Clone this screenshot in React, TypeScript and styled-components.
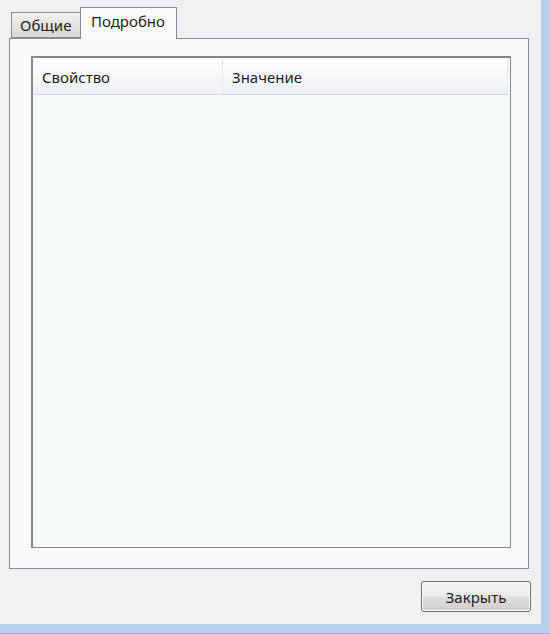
import styled, { createGlobalStyle } from "styled-components";

const GlobalStyle = createGlobalStyle`
  html, body {
    margin: 0;
    padding: 0;
    background: #f0f0f0;
  }
  body {
    font-family: "Noto Sans", "DejaVu Sans", sans-serif;
    font-size: 15px;
    color: #1e1e1e;
  }
`;

function App() {
  return (
    <>
      <GlobalStyle />
      <Window>
        <Body>
          <TabRow>
            <Tab>Общие</Tab>
            <Tab active>Подробно</Tab>
          </TabRow>
          <Panel>
            <ListBox>
              <Header>
                <HeaderCell width={190}>Свойство</HeaderCell>
                <HeaderCell>Значение</HeaderCell>
              </Header>
            </ListBox>
          </Panel>
          <Footer>
            <Button>Закрыть</Button>
          </Footer>
        </Body>
        <SideFrame />
        <BottomFrame />
      </Window>
    </>
  );
}

export default App;

const Window = styled.div`
  width: 550px;
  height: 634px;
  display: grid;
  grid-template-columns: 541px 9px;
  grid-template-rows: 624px 10px;
  overflow: hidden;
`;

const Body = styled.div`
  padding: 7px 0 0 9px;
  display: flex;
  flex-direction: column;
`;

const SideFrame = styled.div`
  background: linear-gradient(to right, #b4cde8, #bcd4ec);
`;

const BottomFrame = styled.div`
  grid-column: 1 / 3;
  background: #b9d1ea;
  border-bottom: 1px solid #48cdec;
`;

const TabRow = styled.div`
  height: 31px;
  display: flex;
  align-items: flex-end;
  padding-left: 2px;
  position: relative;
  z-index: 1;
`;

const Tab = styled.div<{ active?: boolean }>`
  box-sizing: border-box;
  height: ${({ active }) => (active ? "32px" : "26px")};
  margin-bottom: ${({ active }) => (active ? "-1px" : "0")};
  padding: ${({ active }) => (active ? "3px 10px 0 10px" : "2px 4px 0 8px")};
  border: 1px solid #898c95;
  border-bottom: ${({ active }) => (active ? "none" : "1px solid #898c95")};
  border-right: ${({ active }) => (active ? "1px solid #898c95" : "none")};
  background: ${({ active }) =>
    active ? "#fbfcfa" : "linear-gradient(#f2f2f2, #e3e3e3 50%, #d9d9d9)"};
  width: ${({ active }) => (active ? "97px" : "69px")};
  line-height: 20px;
  white-space: nowrap;
`;

const Panel = styled.div`
  box-sizing: border-box;
  width: 520px;
  height: 531px;
  border: 1px solid #898c95;
  background: #f9fbf8;
  padding: 17px 0 0 21px;
`;

const ListBox = styled.div`
  box-sizing: border-box;
  width: 480px;
  height: 492px;
  border: 1px solid #828790;
  border-left-width: 2px;
  border-top-width: 2px;
  background: #f7fbf7;
  padding-right: 2px;
`;

const Header = styled.div`
  height: 36px;
  display: flex;
  border-bottom: 1px solid #d5d5d5;
  background: linear-gradient(#ffffff, #f7f8fa 50%, #eef1f5);
`;

const HeaderCell = styled.div<{ width?: number }>`
  box-sizing: border-box;
  width: ${({ width }) => (width ? `${width}px` : "auto")};
  flex: ${({ width }) => (width ? "none" : "1")};
  padding: 9px 0 0 9px;
  border-right: 1px solid #e3e6ea;
  line-height: 20px;
  color: #1c1c2c;
`;

const Footer = styled.div`
  display: flex;
  justify-content: flex-end;
  padding-top: 12px;
`;

const Button = styled.button`
  box-sizing: border-box;
  width: 110px;
  height: 31px;
  margin-right: 10px;
  border: 1px solid #707070;
  border-radius: 3px;
  background: linear-gradient(#f2f2f2, #ebebeb 48%, #dddddd 52%, #cfcfcf);
  box-shadow: inset 0 0 0 1px #fcfcfc;
  font-family: "Noto Sans", "DejaVu Sans", sans-serif;
  font-size: 15px;
  color: #1e1e1e;
  padding: 0;
  line-height: 28px;
`;
